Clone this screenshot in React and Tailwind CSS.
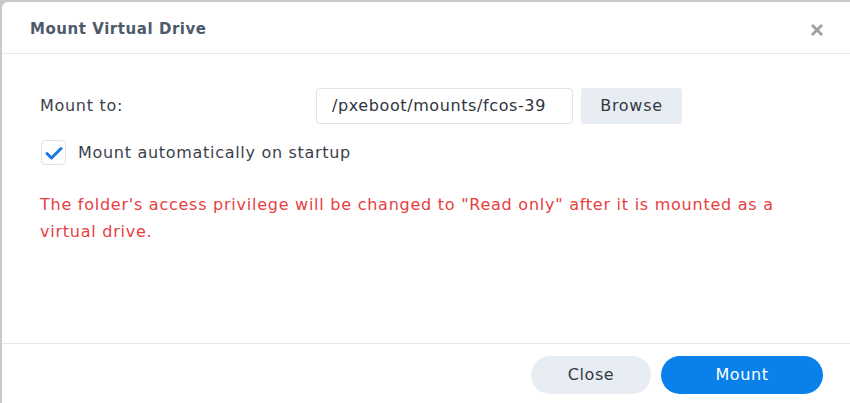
import { useState } from "react";

const App = () => {
  const [autoMount, setAutoMount] = useState(true);

  return (
    <div
      className="w-[850px] h-[403px] bg-[#c9c9c9] pt-[2px] pl-[2px]"
      style={{ fontFamily: '"DejaVu Sans", Verdana, sans-serif' }}
    >
      <div className="h-full bg-white rounded-tl-[6px] flex flex-col">
        {/* header */}
        <div className="h-[52px] flex items-center justify-between pl-[28px] pr-[26px] border-b border-[#e5e9ee]">
          <h1 className="pt-[3px] text-[15px] tracking-[0.55px] font-bold text-[#4d5a6c]">Mount Virtual Drive</h1>
          <button className="text-[#9aa0a6] mt-[4px]">
            <svg width="14" height="14" viewBox="0 0 14 14">
              <path d="M2 2L12 12M12 2L2 12" stroke="currentColor" strokeWidth="2.8" />
            </svg>
          </button>
        </div>

        {/* body */}
        <div className="flex-1 pl-[38px] pr-[40px] pt-[34px] text-[16px] tracking-[0.7px]">
          <div className="flex items-center h-[36px]">
            <span className="w-[276px] text-[#3a424d]">Mount to:</span>
            <div className="w-[257px] h-[36px] border border-[#dfe3e8] rounded-[4px] flex items-center pl-[15px] tracking-[0.6px] text-[#2f3540] overflow-hidden whitespace-nowrap">
              /pxeboot/mounts/fcos-39
            </div>
            <button className="ml-[8px] w-[101px] h-[36px] bg-[#e8edf4] rounded-[3px] text-[#333a44]">
              Browse
            </button>
          </div>

          <label className="flex items-center mt-[16px] cursor-pointer">
            <span
              onClick={() => setAutoMount(!autoMount)}
              className="w-[25px] h-[25px] ml-[1px] border border-[#dbe2ea] rounded-[4px] flex items-center justify-center"
            >
              {autoMount && (
                <svg width="18" height="14" viewBox="0 0 18 14">
                  <path d="M2 7.5L6.5 12L16 2.5" fill="none" stroke="#1677e6" strokeWidth="3" strokeLinecap="round" strokeLinejoin="round" />
                </svg>
              )}
            </span>
            <span className="ml-[12px] text-[#3a424d]">Mount automatically on startup</span>
          </label>

          <p className="mt-[26px] leading-[27px] tracking-[0.75px] text-[#e8403f]">
            The folder's access privilege will be changed to "Read only" after it is mounted as a virtual drive.
          </p>
        </div>

        {/* footer */}
        <div className="h-[60px] border-t border-[#e5e9ee] flex items-start pt-[12px] justify-end gap-[10px] pr-[27px] text-[16px] tracking-[0.6px]">
          <button className="w-[120px] h-[38px] rounded-full bg-[#e8edf4] text-[#333a44]">Close</button>
          <button className="w-[162px] h-[38px] rounded-full bg-[#0a80ea] text-white">Mount</button>
        </div>
      </div>
    </div>
  );
};

export default App;
